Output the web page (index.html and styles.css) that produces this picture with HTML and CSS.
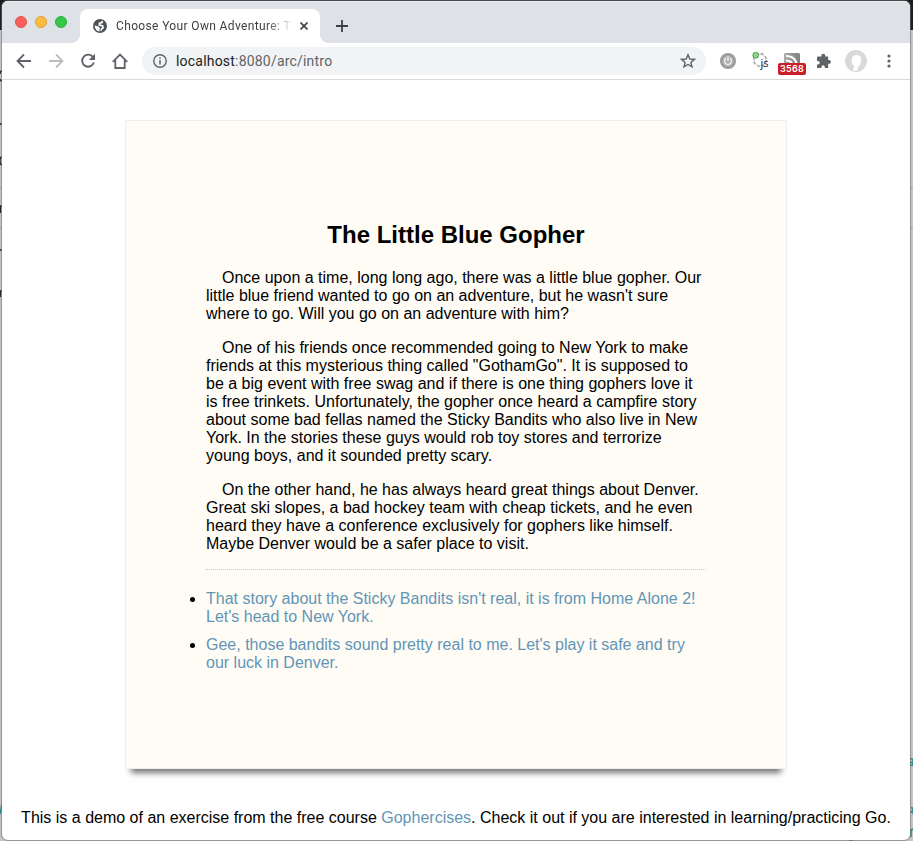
FILE: index.html
```
<!DOCTYPE html>
<html lang="en">
<head>
<meta charset="utf-8">
<title>Choose Your Own Adventure</title>
<link rel="stylesheet" href="styles.css">
</head>
<body>
<svg class="backdrop" width="913" height="841" viewBox="0 0 913 841" aria-hidden="true">
  <g fill="none" stroke="#222" stroke-width="1.4">
    <path d="M2 71Q0 71 0 74M0 79Q0 81 2 81M0 124H2M2 157Q0 157 0 161T2 165M0 206H2M.5 206V213M0 250H2M0 291H2M.5 291V297"/>
  </g>
  <path d="M0 187.500H2M0 228.500H2M910 187.500H913M910 228.500H913" stroke="#aaa"/>
  <g fill="none" stroke="#238b90" stroke-width="1.500">
    <path d="M2 804L0 814M910 759Q913 758 913 761V766M913 762Q910 762 910 764T913 765M911 808Q913 807 913 810V814M913 811Q911 811 911 813M911 829V837M911 831Q912 829 913 829M849 840H853"/>
  </g>
</svg>
<div class="window">
  <div class="tabs">
    <div class="lights"><i class="red"></i><i class="yellow"></i><i class="green"></i></div>
    <div class="tab">
      <svg class="globe" width="14" height="14" viewBox="0 0 14 14"><circle cx="7" cy="7" r="7" fill="#4d5156"/><path d="M9.300 1.800 9 3.500 6.500 4.200 6.300 6 9.600 7 10 9 8.500 9.800 8 11.800" fill="none" stroke="#fff" stroke-width="1.700"/><path d="M1.600 6.500 5 7.200 7 9 6.300 10.800 6.800 12.400Q2 12 1.600 6.500Z" fill="#fff"/></svg>
      <span class="title">Choose Your Own Adventure: T</span>
      <svg class="close" width="8" height="8" viewBox="0 0 8 8"><path d="M.5.5 7.500 7.500M7.500.5.5 7.500" stroke="#3c4043" stroke-width="1.600"/></svg>
    </div>
    <svg class="plus" width="12" height="12" viewBox="0 0 12 12"><path d="M6 0V12M0 6H12" stroke="#3c4043" stroke-width="1.800"/></svg>
  </div>
  <div class="toolbar">
    <svg class="nav" width="16" height="16" viewBox="0 0 16 16"><path d="M15 8H2M8 1.500 1.500 8 8 14.500" fill="none" stroke="#5f6368" stroke-width="1.800"/></svg>
    <svg class="nav" width="16" height="16" viewBox="0 0 16 16"><path d="M1 8H14M8 1.500 14.500 8 8 14.500" fill="none" stroke="#bbbdc0" stroke-width="1.800"/></svg>
    <svg class="nav" width="16" height="16" viewBox="0 0 16 16"><path d="M13.100 4.200A6 6 0 1 0 13.900 9.500" fill="none" stroke="#5f6368" stroke-width="1.900"/><path d="M15 .8V7H8.800Z" fill="#5f6368"/></svg>
    <svg class="nav" width="16" height="16" viewBox="0 0 16 16"><path d="M.8 8.800 8 1.600 15.200 8.800M3.300 7V15H12.700V7" fill="none" stroke="#5f6368" stroke-width="1.800"/></svg>
    <div class="address">
      <svg width="14" height="14" viewBox="0 0 14 14"><circle cx="7" cy="7" r="6.200" fill="none" stroke="#5f6368" stroke-width="1.400"/><path d="M7 6V10.500M7 3.500V5" stroke="#5f6368" stroke-width="1.500"/></svg>
      <span class="url"><b>localhost</b>:8080/arc/intro</span>
      <svg width="16" height="16" viewBox="0 0 16 16"><path d="M8 1.800 9.800 6 14.400 6.400 10.900 9.400 12 13.900 8 11.500 4 13.900 5.100 9.400 1.600 6.400 6.200 6Z" fill="none" stroke="#5f6368" stroke-width="1.400"/></svg>
    </div>
    <svg class="power" width="16" height="16" viewBox="0 0 16 16"><circle cx="8" cy="8" r="8" fill="#9b9b9b"/><circle cx="8" cy="8" r="5.500" fill="#b4b4b4"/><path d="M6.200 5A3.500 3.500 0 1 0 9.800 5M8 3.500V8" fill="none" stroke="#f4f4f4" stroke-width="1.200"/></svg>
    <svg class="js" width="18" height="20" viewBox="0 0 18 20"><circle cx="8" cy="9" r="6" fill="none" stroke="#aaa" stroke-width="2.400" stroke-dasharray="2.700 2"/><circle cx="8" cy="9" r="5.700" fill="#fff" stroke="#bbb" stroke-width=".7"/><circle cx="3.700" cy="4.200" r="3.200" fill="#48ae4b"/><circle cx="3.700" cy="4.200" r="1.600" fill="#7cc77e" stroke="#d4f0d4" stroke-width=".8"/><text x="8.500" y="16">js</text></svg>
    <div class="feed">
      <svg width="16" height="16" viewBox="0 0 16 16"><defs><linearGradient id="feed-fill" x2="1"><stop stop-color="#aaa"/><stop offset="1" stop-color="#808080"/></linearGradient></defs><rect width="16" height="16" rx="1.500" fill="url(#feed-fill)"/><path d="M2 3Q12 3 13 13M2 7.500Q8 7.500 9 13" fill="none" stroke="#fff" stroke-width="2"/></svg>
      <span>3568</span>
    </div>
    <svg class="puzzle" width="16" height="16" viewBox="0 0 16 16"><path d="M2 3.500H5.400V2.600A1.900 1.900 0 0 1 9.200 2.600V3.500H12.200V7H13A1.900 1.900 0 0 1 13 10.800H12.200V15H8.800V14A1.700 1.700 0 0 0 5.400 14V15H1V11.500H2A1.700 1.700 0 0 0 2 8H1V4.500Q1 3.500 2 3.500Z" fill="#5f6368"/></svg>
    <svg class="avatar" width="22" height="22" viewBox="0 0 22 22"><circle cx="11" cy="11" r="11" fill="#d9d9d9"/><path d="M7 13Q5.500 5 11.500 5T16 11Q15.500 16 13 16.500L12.500 20Q10 21.500 7.500 20.500L9.500 16.500Q7.500 15.500 7 13Z" fill="#fff"/></svg>
    <svg class="dots" width="4" height="14" viewBox="0 0 4 14"><g fill="#5f6368"><circle cx="2" cy="2" r="1.600"/><circle cx="2" cy="7" r="1.600"/><circle cx="2" cy="12" r="1.600"/></g></svg>
  </div>
  <main>
    <section class="page">
      <h1>The Little Blue Gopher</h1>
      <p>Once upon a time, long long ago, there was a little blue gopher. Our little blue friend wanted to go on an adventure, but he wasn't sure where to go. Will you go on an adventure with him?</p>
      <p>One of his friends once recommended going to New York to make friends at this mysterious thing called "GothamGo". It is supposed to be a big event with free swag and if there is one thing gophers love it is free trinkets. Unfortunately, the gopher once heard a campfire story about some bad fellas named the Sticky Bandits who also live in New York. In the stories these guys would rob toy stores and terrorize young boys, and it sounded pretty scary.</p>
      <p>On the other hand, he has always heard great things about Denver. Great ski slopes, a bad hockey team with cheap tickets, and he even heard they have a conference exclusively for gophers like himself. Maybe Denver would be a safer place to visit.</p>
      <ul>
        <li><a>That story about the Sticky Bandits isn't real, it is from Home Alone 2! Let's head to New York.</a></li>
        <li><a>Gee, those bandits sound pretty real to me. Let's play it safe and try our luck in Denver.</a></li>
      </ul>
    </section>
    <footer>This is a demo of an exercise from the free course <a>Gophercises</a>. Check it out if you are interested in learning/practicing Go.</footer>
  </main>
</div>
</body>
</html>
```
FILE: styles.css
```
* { box-sizing: border-box; }
body {
  margin: 0;
  height: 841px;
  padding: 1px 3px 1px 2px;
  overflow: hidden;
  background: linear-gradient(#1c1b20 30px, #c6c6c6 30px);
  font: 16px/18px "Liberation Sans", Arial, sans-serif;
  color: #000;
}
svg { display: block; flex: none; }
.backdrop { position: absolute; left: 0; top: 0; }
.window {
  position: relative;
  height: 839px;
  background: #fff;
  border-radius: 6px;
  overflow: hidden;
  box-shadow: 0 0 1px 1px rgba(110, 110, 110, .6);
}
.tabs { height: 42px; background: #dee1e6; display: flex; box-shadow: inset 0 1px #eceef1; }
.lights { width: 78px; padding: 15px 0 0 13px; display: flex; gap: 8px; }
.lights i { width: 12px; height: 12px; border-radius: 50%; }
.red { background: #fc605c; border: 1px solid #e2504b; }
.yellow { background: #fdbc40; border: 1px solid #e0a034; }
.green { background: #34c84a; border: 1px solid #2bad3b; }
.tab {
  width: 240px;
  height: 34px;
  margin-top: 8px;
  padding-left: 13px;
  border-radius: 8px 8px 0 0;
  background: #fff;
  display: flex;
  align-items: center;
  position: relative;
}
.tab::before, .tab::after { content: ""; position: absolute; bottom: 0; width: 8px; height: 8px; }
.tab::before { left: -8px; background: radial-gradient(circle at 0 0, transparent 7.5px, #fff 8px); }
.tab::after { right: -8px; background: radial-gradient(circle at 100% 0, transparent 7.5px, #fff 8px); }
.title {
  width: 176px;
  margin-left: 9px;
  font: 12px/16px Roboto, sans-serif;
  letter-spacing: .36px;
  white-space: nowrap;
  overflow: hidden;
  color: #3c4043;
  -webkit-mask-image: linear-gradient(90deg, #000 150px, transparent 177px);
  mask-image: linear-gradient(90deg, #000 150px, transparent 177px);
}
.close { margin-left: 8px; }
.plus { margin: 19px 0 0 16px; }
.toolbar {
  height: 37px;
  border-bottom: 1px solid #d9dadc;
  padding-left: 14px;
  display: flex;
  align-items: center;
}
.nav { margin-right: 16px; }
.address {
  width: 564px;
  height: 28px;
  margin-left: -2px;
  margin-right: 14px;
  padding: 0 10px 0 11px;
  border-radius: 14px;
  background: #f1f3f4;
  display: flex;
  align-items: center;
}
.url { flex: 1; margin-left: 9px; font: 14px/20px Roboto, sans-serif; letter-spacing: .2px; color: #5f6368; }
.url b { font-weight: 400; color: #202124; }
.js { margin-left: 16px; }
.js text { font: 11px "Open Sans", sans-serif; fill: #222; }
.feed { width: 28px; height: 22px; margin-left: 8px; padding: 3px 0 0 6px; position: relative; }
.feed span {
  position: absolute;
  left: 0;
  top: 13px;
  width: 28px;
  height: 12px;
  border-radius: 2px;
  background: #c9202b;
  color: #fff;
  font: 600 9px/12px Inter, sans-serif;
  letter-spacing: .3px;
  text-align: center;
}
.puzzle { margin-left: 10px; }
.avatar { margin-left: 13px; }
.dots { margin-left: 19.5px; }
main { padding-top: 40px; }
.page {
  width: 662px;
  margin: 0 auto;
  padding: 80px;
  border: 1px solid #eee;
  background: #fffcf6;
  box-shadow: 0 10px 6px -6px #777;
}
h1 { margin: 20px 0; font-size: 24px; line-height: 28px; text-align: center; }
p { margin: 0 0 16px; text-indent: 16px; }
ul { margin: 0 0 16px; padding: 10px 0 0; border-top: 1px dotted #ccc; }
li { padding-top: 10px; }
a { color: #6295b5; }
footer { margin-top: 40px; text-align: center; white-space: nowrap; }
```
